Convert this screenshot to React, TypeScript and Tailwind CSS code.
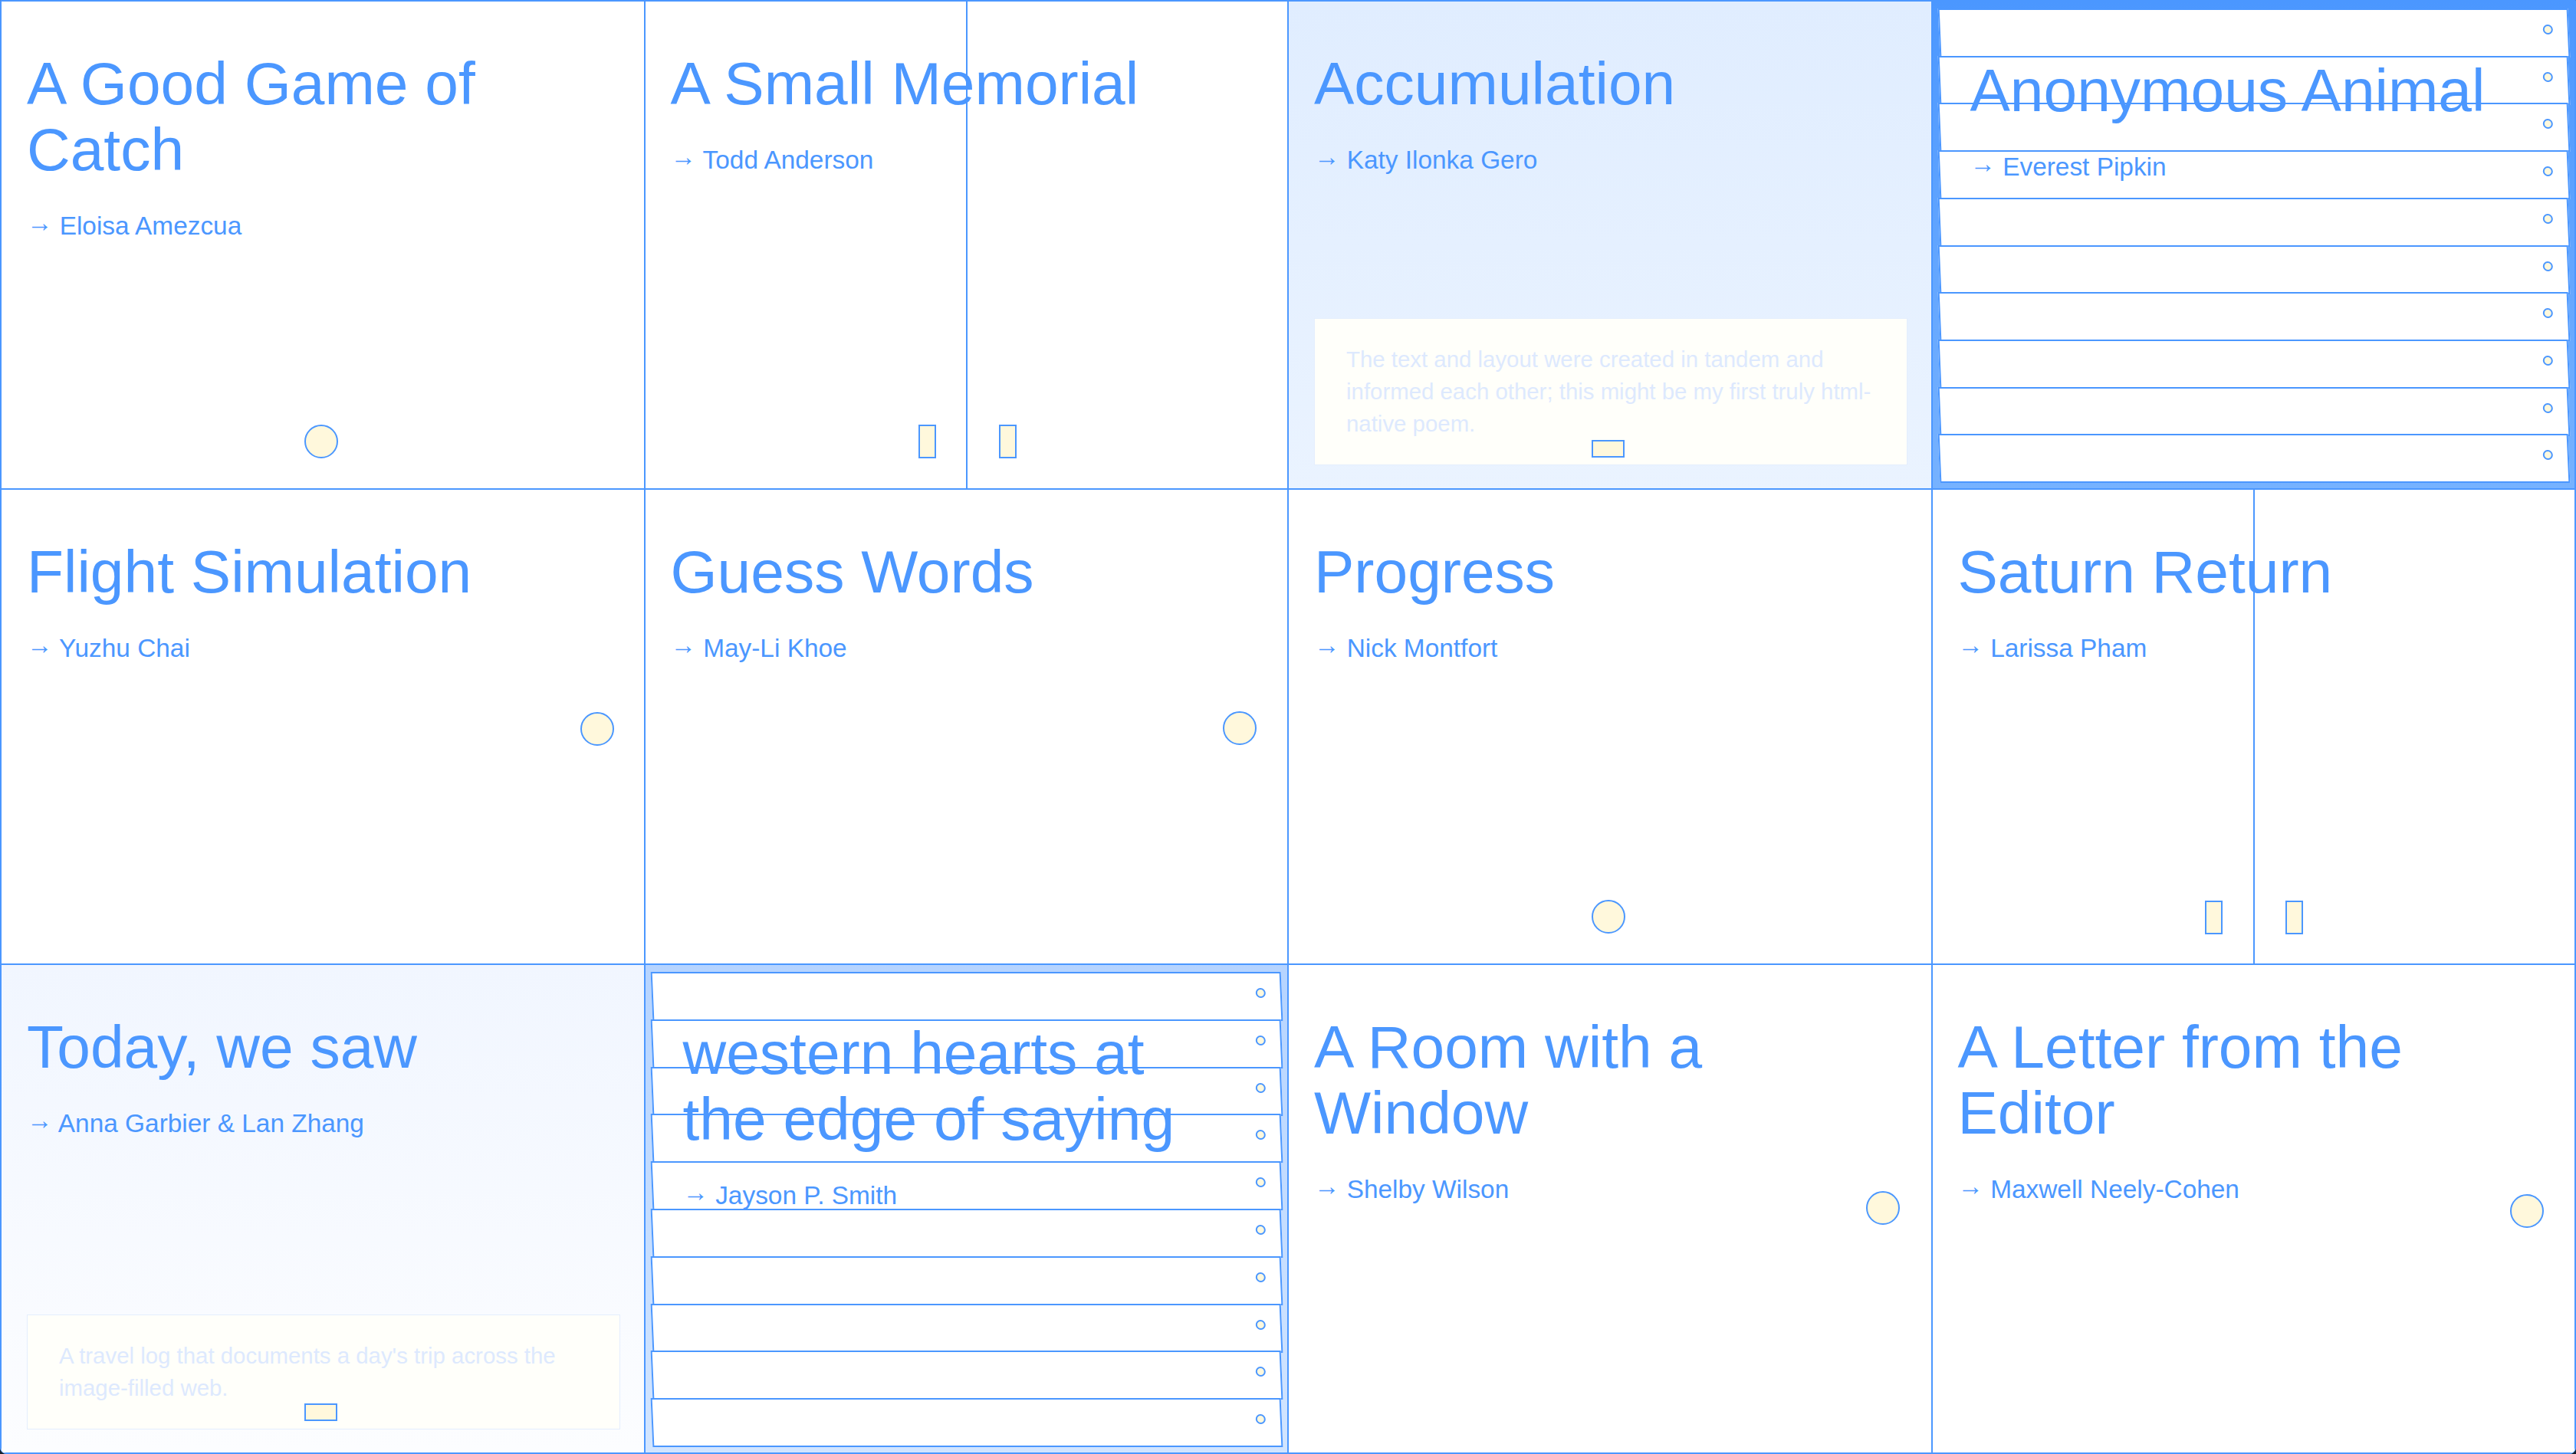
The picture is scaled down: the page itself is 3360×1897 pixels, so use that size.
import type { ReactNode } from 'react';

// shared bits
const line = 'border-[#4b97ff]';

function Ball({ pos }: { pos: string }) {
  return <span className={`absolute ${pos} h-[44px] w-[44px] rounded-full border-2 ${line} bg-[#fff8dc]`} />;
}

function Bar({ pos, wide = false }: { pos: string; wide?: boolean }) {
  return (
    <span
      className={`absolute ${pos} ${wide ? 'h-[23px] w-[43px]' : 'h-[44px] w-[23px]'} border-2 ${line} bg-[#fff8dc]`}
    />
  );
}

function Split({ top, bars }: { top: string; bars: string[] }) {
  return (
    <>
      <span className="absolute bottom-0 left-[418px] top-0 w-[2px] bg-[#4b97ff]" />
      {bars.map((left) => (
        <Bar key={left} pos={`${left} ${top}`} />
      ))}
    </>
  );
}

function Heading({ title, author }: { title: string; author: string }) {
  return (
    <>
      <h2 className="text-[78.5px] font-normal leading-[86px]">{title}</h2>
      <p className="mt-[37px] text-[33.4px] leading-[40px]">
        <span className="relative -top-[4px]">→</span> {author}
      </p>
    </>
  );
}

interface CardProps {
  title: string;
  author: string;
  bg?: string;
  children?: ReactNode;
}

function Card({ title, author, bg = 'bg-white', children }: CardProps) {
  return (
    <div className={`relative flex flex-col border ${line} ${bg}`}>
      <div className="pl-[33px] pr-[60px] pt-[64px]">
        <Heading title={title} author={author} />
      </div>
      {children}
    </div>
  );
}

function Note({ text, rectTop }: { text: string; rectTop: string }) {
  return (
    <>
      <div className="mb-[30px] ml-[33px] mr-[31px] mt-auto border border-[#e4eefd] bg-[#fffffa] py-[32px] pl-[41px] pr-[30px] text-[29.4px] leading-[42px] text-[#dde9fe]">
        {text}
      </div>
      <Bar wide pos={`left-[395px] ${rectTop}`} />
    </>
  );
}

interface SlatProps {
  title: string;
  author: string;
  bg: string;
  top: string;
}

function SlatCard({ title, author, bg, top }: SlatProps) {
  return (
    <div className={`relative flex flex-col border ${line} ${bg} px-[8px] pb-[7px] pt-[9px]`}>
      {Array.from({ length: 10 }).map((_, i) => (
        <div
          key={i}
          className={`flex flex-1 skew-x-[2.5deg] justify-end border-2 ${line} bg-white pr-[19px] pt-[19px] ${i > 0 ? '-mt-[2px]' : ''}`}
        >
          <span className={`h-[13px] w-[13px] rounded-full border-2 ${line} bg-[#fff8dc]`} />
        </div>
      ))}
      <div className={`absolute left-[49px] right-[80px] ${top}`}>
        <Heading title={title} author={author} />
      </div>
    </div>
  );
}

export default function App() {
  return (
    <div className="h-[1897px] w-[3360px] bg-[#17222d] font-[Liberation_Sans,Arial,sans-serif] text-[#4b97ff]">
      <div className={`grid h-full grid-cols-4 grid-rows-[637px_620px_638px] overflow-hidden rounded-b-[8px] border ${line} bg-white`}>
        {/* row 1 */}
        <Card title="A Good Game of Catch" author="Eloisa Amezcua">
          <Ball pos="left-[395px] top-[552px]" />
        </Card>
        <Card title="A Small Memorial" author="Todd Anderson">
          <Split top="top-[552px]" bars={['left-[356px]', 'left-[461px]']} />
        </Card>
        <Card title="Accumulation" author="Katy Ilonka Gero" bg="bg-gradient-to-b from-[#e0edff] to-[#eaf3ff]">
          <Note
            rectTop="top-[572px]"
            text="The text and layout were created in tandem and informed each other; this might be my first truly html-native poem."
          />
        </Card>
        <SlatCard
          title="Anonymous Animal"
          author="Everest Pipkin"
          top="top-[73px]"
          bg="bg-gradient-to-b from-[#4b97ff] to-[#76b2ff]"
        />

        {/* row 2 */}
        <Card title="Flight Simulation" author="Yuzhu Chai">
          <Ball pos="left-[755px] top-[290px]" />
        </Card>
        <Card title="Guess Words" author="May-Li Khoe">
          <Ball pos="left-[753px] top-[289px]" />
        </Card>
        <Card title="Progress" author="Nick Montfort">
          <Ball pos="left-[395px] top-[535px]" />
        </Card>
        <Card title="Saturn Return" author="Larissa Pham">
          <Split top="top-[536px]" bars={['left-[355px]', 'left-[460px]']} />
        </Card>

        {/* row 3 */}
        <Card title="Today, we saw" author="Anna Garbier & Lan Zhang" bg="bg-gradient-to-b from-[#f1f6ff] to-[#fcfdff]">
          <Note
            rectTop="top-[572px]"
            text="A travel log that documents a day's trip across the image-filled web."
          />
        </Card>
        <SlatCard
          title="western hearts at the edge of saying"
          author="Jayson P. Smith"
          top="top-[72px]"
          bg="bg-gradient-to-b from-[#b6d4ff] to-[#d2e5ff]"
        />
        <Card title="A Room with a Window" author="Shelby Wilson">
          <Ball pos="left-[753px] top-[295px]" />
        </Card>
        <Card title="A Letter from the Editor" author="Maxwell Neely-Cohen">
          <Ball pos="left-[753px] top-[299px]" />
        </Card>
      </div>
    </div>
  );
}
